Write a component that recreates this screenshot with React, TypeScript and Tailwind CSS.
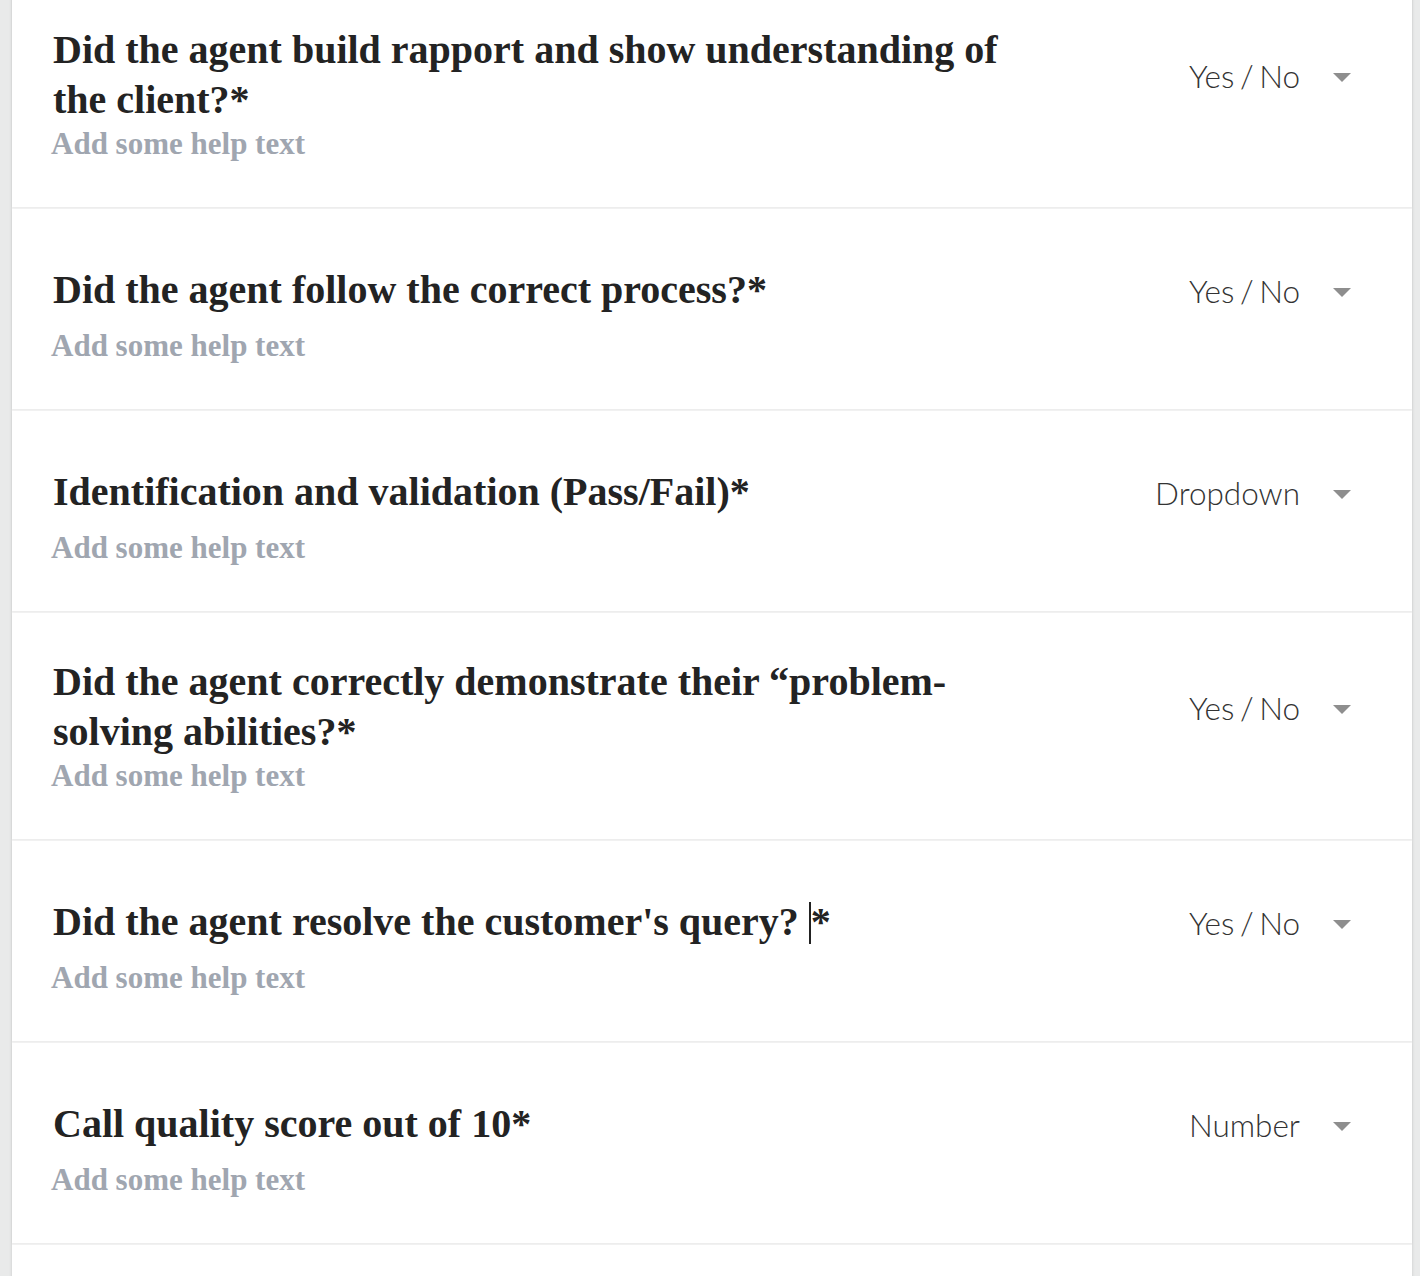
import { useState } from "react";

// --- Types ---
type Question = {
  id: number;
  title: string;
  answerType: string;
  cursor?: boolean;
};

const questions: Question[] = [
  { id: 1, title: "Did the agent build rapport and show understanding of the client?*", answerType: "Yes / No" },
  { id: 2, title: "Did the agent follow the correct process?*", answerType: "Yes / No" },
  { id: 3, title: "Identification and validation (Pass/Fail)*", answerType: "Dropdown" },
  { id: 4, title: "Did the agent correctly demonstrate their \u201cproblem-solving abilities?*", answerType: "Yes / No" },
  { id: 5, title: "Did the agent resolve the customer's query? ", answerType: "Yes / No", cursor: true },
  { id: 6, title: "Call quality score out of 10*", answerType: "Number" },
];

const serif = "font-['Liberation_Serif','Times_New_Roman',serif]";

// --- Caret ---
const Caret = () => (
  <svg width="18" height="9" viewBox="0 0 18 9" className="shrink-0">
    <path d="M0 0 L18 0 L9 9 Z" fill="#8e8e8e" />
  </svg>
);

// --- Question card ---
const QuestionCard = ({ q }: { q: Question }) => (
  <div className="bg-white pl-[41px] pr-[61px] py-11 shadow-[0_1px_2px_rgba(0,0,0,0.05)]">
    <div className="flex items-center justify-between min-h-[74px]">
      <h2 className={`${serif} w-[1000px] text-[40px] leading-[50px] font-bold text-[#232323]`}>
        {q.title}
        {q.cursor && (
          <>
            <span className="inline-block w-[2px] h-[42px] bg-[#222] align-[-9px]" />
            *
          </>
        )}
      </h2>
      <button className="flex items-center gap-[33px] pt-1 font-['Lato',sans-serif] font-light text-[31.5px] [word-spacing:-3px] text-[#333]">
        <span>{q.answerType}</span>
        <Caret />
      </button>
    </div>
    <p className={`${serif} text-[31px] leading-[38px] font-bold text-[#a0a6b0] -ml-0.5`}>
      Add some help text
    </p>
  </div>
);

export default function App() {
  const [items] = useState(questions);

  return (
    <div className="min-h-screen bg-[#e9eaea] pl-3 pr-2 overflow-hidden">
      {/* Question list */}
      <div className="-mt-[19px] flex flex-col gap-0.5 bg-[#f5f5f5] shadow-[0_0_3px_rgba(0,0,0,0.15)]">
        {items.map((q) => (
          <QuestionCard key={q.id} q={q} />
        ))}
        <div className="bg-white h-[60px]" />
      </div>
    </div>
  );
}
